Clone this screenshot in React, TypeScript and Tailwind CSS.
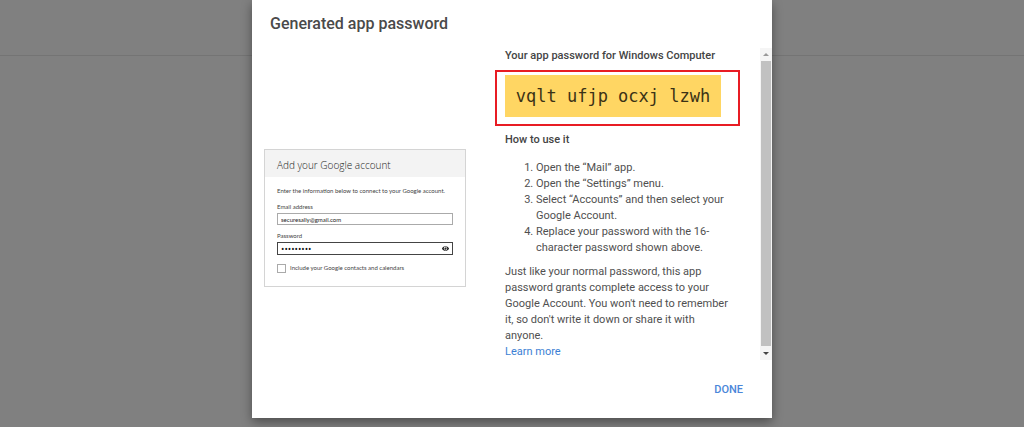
import {FaEye} from 'react-icons/fa';

function AccountPreview() {
    return (
        <form className="w-[202px] shrink-0 border border-[#d4d4d4] bg-white font-[Lato,sans-serif] text-[6px] leading-[10px] text-[#444]">
            <h3 className="bg-[#f3f3f3] px-3 pt-2 pb-1 font-['Open_Sans',sans-serif] text-[10px] leading-[15px] font-light text-[#222]">
                Add your Google account
            </h3>
            <div className="flex flex-col px-3 pt-[9px] pb-[13px]">
                <p className="whitespace-nowrap">
                    Enter the information below to connect to your Google account.
                </p>
                <label htmlFor="email" className="mt-[6px]">Email address</label>
                <input
                    id="email"
                    type="email"
                    defaultValue="securesally@gmail.com"
                    className="mt-px h-3 w-full border border-[#aaa] px-[3px] text-[#222]"
                />
                <label htmlFor="password" className="mt-[6px]">Password</label>
                <div className="mt-px flex h-[13px] items-center border border-[#444] px-[3px]">
                    <input
                        id="password"
                        type="password"
                        defaultValue="ninechars"
                        className="min-w-0 flex-1 font-['Open_Sans',sans-serif] text-[9px] text-[#111] outline-none"
                    />
                    <button type="button" aria-label="Show password">
                        <FaEye className="size-[7px] text-[#222]"/>
                    </button>
                </div>
                <label className="mt-2 flex items-center gap-1">
                    <input type="checkbox" className="size-[9px] appearance-none border border-[#aaa] bg-white"/>
                    Include your Google contacts and calendars
                </label>
            </div>
        </form>
    );
}

function Scrollbar() {
    return (
        <div className="flex w-3 shrink-0 flex-col bg-[#f5f5f5]" aria-hidden="true">
            <div className="flex h-[13px] items-center justify-center">
                <svg viewBox="0 0 6 3" className="h-[3px] w-[6px] fill-[#999]"><path d="M0 3h6L3 0z"/></svg>
            </div>
            <div className="mr-px ml-px flex-1 bg-[#c1c1c1]"/>
            <div className="flex h-[14px] items-center justify-center">
                <svg viewBox="0 0 6 3" className="h-[3px] w-[6px] fill-[#444]"><path d="M0 0h6L3 3z"/></svg>
            </div>
        </div>
    );
}

export default function App() {
    return (
        <div className="grid min-h-screen bg-[#808080] font-[Roboto,sans-serif] text-[11px] leading-4 text-[#505050]">
            <header className="col-start-1 row-start-1 h-14 border-b border-[#747474]"/>
            <main
                role="dialog"
                aria-labelledby="dialog-title"
                className="relative col-start-1 row-start-1 flex w-[520px] flex-col justify-self-center self-start bg-white shadow-[0_4px_10px_rgba(0,0,0,0.4)]"
            >
                <h1 id="dialog-title" className="px-[18px] py-3 text-base leading-6 font-medium text-[#4a4a4a]">
                    Generated app password
                </h1>
                <div className="flex justify-between pl-3">
                    <div className="flex items-center pt-7">
                        <AccountPreview/>
                    </div>
                    <div className="flex">
                        <section className="w-[265px] pr-5">
                            <h2 className="pl-[10px] font-medium text-[#444]">Your app password for Windows Computer</h2>
                            <div className="mt-[6px] border-2 border-[#e81c24] px-2 pt-[3px] pb-[7px]">
                                <p className="w-[216px] bg-[#ffd663] py-2 text-center font-['DejaVu_Sans_Mono',monospace] text-[17px] leading-[26px] text-[#3b3216]">
                                    vqlt ufjp ocxj lzwh
                                </p>
                            </div>
                            <div className="pr-2 pl-[10px]">
                                <h2 className="mt-[6px] font-medium text-[#444]">How to use it</h2>
                                <ol className="mt-3 list-decimal pl-[31px]">
                                    <li>Open the “Mail” app.</li>
                                    <li>Open the “Settings” menu.</li>
                                    <li>Select “Accounts” and then select your Google Account.</li>
                                    <li>Replace your password with the 16-character password shown above.</li>
                                </ol>
                                <p className="mt-2">
                                    Just like your normal password, this app password grants complete access to your
                                    Google Account. You won't need to remember it, so don't write it down or share it
                                    with anyone.
                                </p>
                                <a href="#" className="text-[#3c7fd4]">Learn more</a>
                            </div>
                        </section>
                        <Scrollbar/>
                    </div>
                </div>
                <div className="flex justify-end px-[29px] pt-[22px] pb-5">
                    <button type="button" className="font-medium text-[#4a86d9]">DONE</button>
                </div>
            </main>
        </div>
    );
}
